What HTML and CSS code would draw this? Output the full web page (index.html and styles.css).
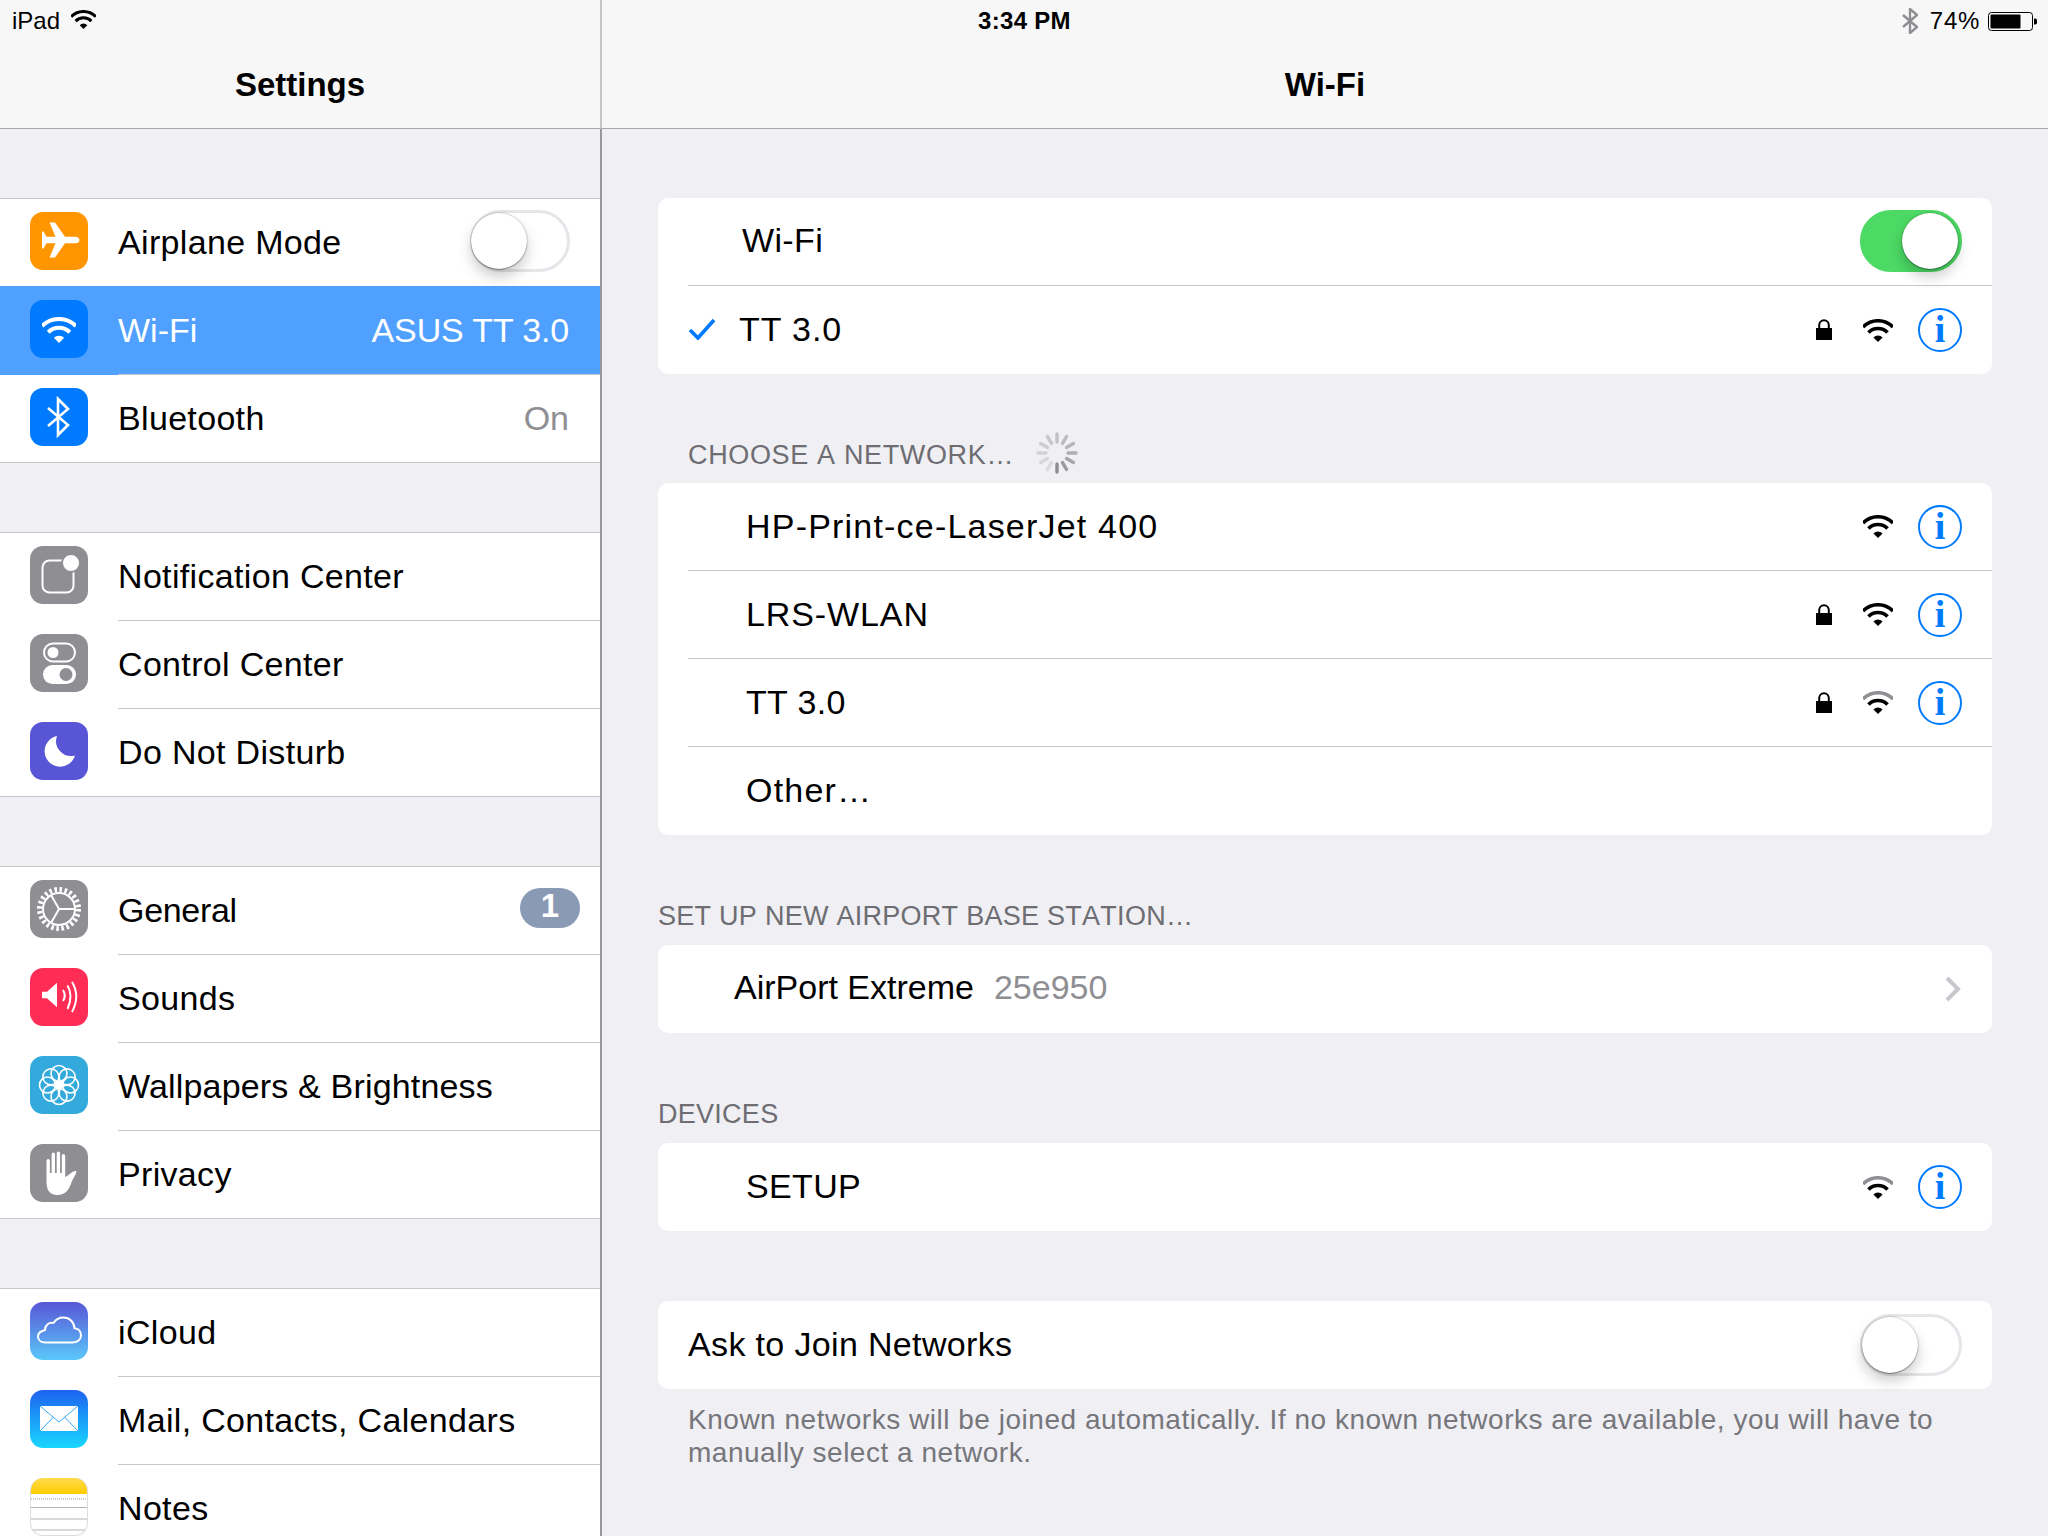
FILE: index.html
```html
<!DOCTYPE html>
<html lang="en">
<head>
<meta charset="utf-8">
<title>Settings – Wi-Fi</title>
<link rel="stylesheet" href="styles.css">
</head>
<body>
<svg class="sprites" aria-hidden="true">
  <symbol id="wifi" viewBox="0 0 30 23">
    <path class="wifi-outer" d="M0 8A21.2 21.2 0 0 1 30 8"/>
    <path class="wifi-mid" d="M5.45 13.45A13.5 13.5 0 0 1 24.55 13.45"/>
    <path class="wifi-dot" d="M15 23L10.4 18.4A6.5 6.5 0 0 1 19.6 18.4Z"/>
  </symbol>
  <symbol id="lock" viewBox="0 0 16 22">
    <path class="lock-shape" d="M0 10H2.2V7A5.8 5.8 0 0 1 13.8 7V10H16V22H0ZM4.2 10H11.8V7A3.8 3.8 0 0 0 4.2 7Z"/>
  </symbol>
</svg>

<div class="ipad">
  <div class="status">
    <div class="status-left">
      <span>iPad</span>
      <svg class="status-wifi"><use href="#wifi"/></svg>
    </div>
    <div class="status-time">3:34 PM</div>
    <div class="status-right">
      <svg class="status-bt" viewBox="0 0 16 26"><path d="M1 7L15 19L8 25V1L15 7L1 19"/></svg>
      <span class="status-pct">74%</span>
      <svg class="status-batt" viewBox="0 0 49 19">
        <rect class="batt-case" x=".5" y=".5" width="44" height="18" rx="3"/>
        <rect class="batt-fill" x="2.5" y="2.5" width="30" height="14" rx="1"/>
        <path class="batt-fill" d="M46 6.5h1.2a1.8 1.8 0 0 1 1.8 1.8v2.4a1.8 1.8 0 0 1-1.8 1.8H46Z"/>
      </svg>
    </div>
  </div>

  <aside class="side">
    <header class="nav nav-side"><h1 class="nav-title">Settings</h1></header>
    <div class="side-scroll">
      <section class="group">
        <div class="row">
          <div class="icon bg-orange">
            <svg viewBox="0 0 58 58"><path class="fill" d="M49.5 28c0-2-2-3.3-4-3.3H35L25 10.5h-5.5l6 14.2h-9l-3-5.2H12v17h1.5l3-5.2h9l-6 14.2H25l10-14.2h10.5c2 0 4-1.300 4-3.300Z"/></svg>
          </div>
          <div class="row-body"><span class="row-label">Airplane Mode</span><span class="toggle"><span class="knob"></span></span></div>
        </div>
        <div class="row row-selected">
          <div class="icon bg-blue">
            <svg viewBox="0 0 58 58"><use class="icon-wifi" href="#wifi" x="12" y="17" width="34" height="26"/></svg>
          </div>
          <div class="row-body"><span class="row-label">Wi-Fi</span><span class="row-value">ASUS TT 3.0</span></div>
        </div>
        <div class="row">
          <div class="icon bg-blue">
            <svg viewBox="0 0 58 58"><path class="line line-bt" d="M18 20L38 37L28 47V11L38 21L18 38"/></svg>
          </div>
          <div class="row-body"><span class="row-label">Bluetooth</span><span class="row-value">On</span></div>
        </div>
      </section>

      <section class="group">
        <div class="row">
          <div class="icon bg-gray">
            <svg viewBox="0 0 58 58">
              <rect class="line" x="12.500" y="14.500" width="31" height="32" rx="7"/>
              <circle class="fill ring" cx="41" cy="17" r="9"/>
            </svg>
          </div>
          <div class="row-body"><span class="row-label">Notification Center</span></div>
        </div>
        <div class="row">
          <div class="icon bg-gray">
            <svg viewBox="0 0 58 58">
              <rect class="line" x="14" y="9.500" width="31" height="18" rx="9"/>
              <circle class="fill" cx="23" cy="18.500" r="5.500"/>
              <rect class="fill" x="13" y="31" width="33" height="19" rx="9.500"/>
              <circle class="cut" cx="36" cy="40.500" r="6.500"/>
            </svg>
          </div>
          <div class="row-body"><span class="row-label">Control Center</span></div>
        </div>
        <div class="row">
          <div class="icon bg-indigo">
            <svg viewBox="0 0 58 58"><path class="fill" d="M27 14A15.500 15.500 0 1 0 45 33.500A15 15 0 0 1 27 14Z"/></svg>
          </div>
          <div class="row-body"><span class="row-label">Do Not Disturb</span></div>
        </div>
      </section>

      <section class="group">
        <div class="row">
          <div class="icon bg-gray">
            <svg viewBox="0 0 58 58">
              <circle class="gear-teeth" cx="29" cy="29" r="19.500"/>
              <circle class="line" cx="29" cy="29" r="16"/>
              <path class="line" d="M29 29H45M29 29L21 15M29 29L21 43"/>
            </svg>
          </div>
          <div class="row-body"><span class="row-label label-tight">General</span><span class="badge">1</span></div>
        </div>
        <div class="row">
          <div class="icon bg-pink">
            <svg viewBox="0 0 58 58">
              <path class="fill" d="M12 23.700H17L27 14.700V39.300L17 30.300H12Z"/>
              <path class="line" d="M33 22Q36.500 27.500 33 33M37.500 17.500Q43.500 27.500 37.500 41M42 14Q50.500 28 42 44"/>
            </svg>
          </div>
          <div class="row-body"><span class="row-label">Sounds</span></div>
        </div>
        <div class="row">
          <div class="icon bg-cyan">
            <svg viewBox="0 0 58 58">
              <g class="petals">
                <circle cx="29" cy="17.500" r="8"/><circle cx="37.100" cy="20.900" r="8"/>
                <circle cx="40.500" cy="29" r="8"/><circle cx="37.100" cy="37.100" r="8"/>
                <circle cx="29" cy="40.500" r="8"/><circle cx="20.900" cy="37.100" r="8"/>
                <circle cx="17.500" cy="29" r="8"/><circle cx="20.900" cy="20.900" r="8"/>
              </g>
              <circle class="fill" cx="29" cy="29" r="3.200"/>
            </svg>
          </div>
          <div class="row-body"><span class="row-label label-snug">Wallpapers &amp; Brightness</span></div>
        </div>
        <div class="row">
          <div class="icon bg-gray">
            <svg viewBox="0 0 58 58"><path class="fill" d="M16.500 17q0-2 1.700-2t1.700 2V29h1.700V10.500q0-2 1.700-2t1.700 2V29h1.700V9.500q0-2 1.700-2t1.700 2V29h1.700V12q0-2 1.700-2t1.700 2V33C38 32 43 26 46 27C47.500 28 44 33 42 37C39.500 44 37 51 27 51C20 51 16.500 46 16.500 38Z"/></svg>
          </div>
          <div class="row-body"><span class="row-label">Privacy</span></div>
        </div>
      </section>

      <section class="group">
        <div class="row">
          <div class="icon bg-icloud">
            <svg viewBox="0 0 58 58"><path class="line" d="M15 40.500H43C48 40.500 51 37 51 33.500C51 29 48 26.500 44.500 26.200C44 20 39.500 15.500 33.500 15.500C28.500 15.500 25.500 18 23.500 21C18.500 20 15 23.500 15 28C11 29 8 31 8 34.500C8 38 11 40.500 15 40.500Z"/></svg>
          </div>
          <div class="row-body"><span class="row-label">iCloud</span></div>
        </div>
        <div class="row">
          <div class="icon bg-mail">
            <svg viewBox="0 0 58 58">
              <rect class="fill" x="10" y="16" width="38" height="25"/>
              <path class="mail-lines" d="M10 16L29 32L48 16M10 41L23.500 27M48 41L34.500 27"/>
            </svg>
          </div>
          <div class="row-body"><span class="row-label">Mail, Contacts, Calendars</span></div>
        </div>
        <div class="row">
          <div class="icon bg-notes">
            <svg viewBox="0 0 58 58">
              <path class="notes-dots" d="M0 21H58"/>
              <path class="notes-lines" d="M0 29.500H58M0 41H58M0 52H58"/>
            </svg>
          </div>
          <div class="row-body"><span class="row-label">Notes</span></div>
        </div>
      </section>
    </div>
  </aside>

  <main class="detail">
    <header class="nav"><h1 class="nav-title">Wi-Fi</h1></header>
    <div class="detail-body">
      <section class="card">
        <div class="crow"><span class="clabel pad-54">Wi-Fi</span><span class="toggle toggle-on"><span class="knob"></span></span></div>
        <div class="crow">
          <svg class="check" viewBox="0 0 28 22"><path d="M2 12L10 20L26 2"/></svg>
          <span class="clabel pad-23 label-roomy">TT 3.0</span>
          <span class="meta">
            <svg class="lock"><use href="#lock"/></svg>
            <svg class="wifi"><use href="#wifi"/></svg>
            <span class="info">i</span>
          </span>
        </div>
      </section>

      <div class="section-head inset">
        <span>CHOOSE A NETWORK…</span>
        <svg class="spinner" viewBox="-21 -21 42 42">
          <g class="spokes">
            <path class="s0" d="M0 11V19"/>
            <path class="s1" transform="rotate(-30)" d="M0 11V19"/>
            <path class="s2" transform="rotate(-60)" d="M0 11V19"/>
            <path class="s3" transform="rotate(-90)" d="M0 11V19"/>
            <path class="s4" transform="rotate(-120)" d="M0 11V19"/>
            <path class="s5" transform="rotate(-150)" d="M0 11V19"/>
            <path class="s6" transform="rotate(180)" d="M0 11V19"/>
            <path class="s7" transform="rotate(150)" d="M0 11V19"/>
            <path class="s8" transform="rotate(120)" d="M0 11V19"/>
            <path class="s9" transform="rotate(90)" d="M0 11V19"/>
            <path class="s10" transform="rotate(60)" d="M0 11V19"/>
            <path class="s11" transform="rotate(30)" d="M0 11V19"/>
          </g>
        </svg>
      </div>
      <section class="card">
        <div class="crow"><span class="clabel pad-58 label-wide label-level">HP-Print-ce-LaserJet 400</span>
          <span class="meta"><svg class="wifi"><use href="#wifi"/></svg><span class="info">i</span></span></div>
        <div class="crow"><span class="clabel pad-58 label-roomy label-level">LRS-WLAN</span>
          <span class="meta"><svg class="lock"><use href="#lock"/></svg><svg class="wifi"><use href="#wifi"/></svg><span class="info">i</span></span></div>
        <div class="crow"><span class="clabel pad-58 label-level">TT 3.0</span>
          <span class="meta"><svg class="lock"><use href="#lock"/></svg><svg class="wifi wifi-weak"><use href="#wifi"/></svg><span class="info">i</span></span></div>
        <div class="crow"><span class="clabel pad-58 label-wide">Other…</span></div>
      </section>

      <div class="section-head">SET UP NEW AIRPORT BASE STATION…</div>
      <section class="card">
        <div class="crow crow-flush">
          <span class="clabel pad-58 label-plain">AirPort Extreme</span>
          <span class="csub">25e950</span>
          <svg class="chevron" viewBox="0 0 16 26"><path d="M2 2L13 13L2 24"/></svg>
        </div>
      </section>

      <div class="section-head">DEVICES</div>
      <section class="card">
        <div class="crow"><span class="clabel pad-58">SETUP</span>
          <span class="meta"><svg class="wifi wifi-weak"><use href="#wifi"/></svg><span class="info">i</span></span></div>
      </section>

      <section class="card card-ask">
        <div class="crow"><span class="clabel">Ask to Join Networks</span><span class="toggle"><span class="knob"></span></span></div>
      </section>
      <p class="foot">Known networks will be joined automatically. If no known networks are available, you will have to manually select a network.</p>
    </div>
  </main>
</div>
</body>
</html>
```

FILE: styles.css
```css
* { box-sizing: border-box; }
html, body { margin: 0; height: 1536px; overflow: hidden; }
body { font-family: "Liberation Sans", Arial, sans-serif; color: #000; background: #efeff4; }
h1 { margin: 0; }
p { margin: 0; }
.sprites { position: absolute; width: 0; height: 0; }

.wifi-outer, .wifi-mid { fill: none; stroke-width: 3.6; }
.wifi-outer { stroke: var(--wifi-outer, currentColor); }
.wifi-mid { stroke: currentColor; }
.wifi-dot { fill: currentColor; }
.lock-shape { fill: #000; fill-rule: evenodd; }

.ipad { position: relative; display: flex; width: 2048px; height: 1536px; overflow: hidden; }

/* status bar lies over both navigation bars */
.status {
  position: absolute; top: 0; left: 0; right: 0; height: 42px; z-index: 2;
  display: grid; grid-template-columns: 1fr auto 1fr; align-items: center;
  padding: 0 11px 0 12px; font-size: 24px; color: #000;
}
.status-left { display: flex; align-items: center; gap: 11px; }
.status-wifi { width: 25px; height: 19px; margin-top: -4px; }
.status-time { font-weight: 700; letter-spacing: .3px; }
.status-right { display: flex; align-items: center; justify-content: flex-end; }
.status-bt { width: 16px; height: 26px; fill: none; stroke: #8e8e93; stroke-width: 2.4; margin-right: 12px; }
.status-pct { letter-spacing: .7px; margin-right: 8px; }
.status-batt { width: 49px; height: 19px; }
.batt-case { fill: none; stroke: #000; }
.batt-fill { fill: #000; }

/* navigation bars */
.nav {
  height: 129px; padding-top: 42px; display: flex; align-items: center; justify-content: center;
  background: #f7f7f7; border-bottom: 1px solid #a7a7aa;
}
.nav-side { border-right: 2px solid #c6c6c8; }
.nav-title { font-size: 33px; font-weight: 700; line-height: 86px; }

/* master column */
.side { width: 602px; flex: none; display: flex; flex-direction: column; }
.side-scroll { flex: 1; padding-top: 69px; border-right: 2px solid #98989d; background: #efeff4; }
.group { background: #fff; border-top: 1px solid #c8c7cc; margin-bottom: 69px; }
.row { display: flex; height: 88px; padding-left: 30px; }
.row:last-child { border-bottom: 1px solid #c8c7cc; }
.icon { flex: none; width: 58px; height: 58px; margin-top: 13px; border-radius: 13px; overflow: hidden; }
.icon svg { display: block; width: 58px; height: 58px; }
.row-body {
  flex: 1; display: flex; align-items: center; justify-content: space-between;
  margin-left: 30px; padding-right: 31px; border-bottom: 1px solid #c8c7cc; font-size: 34px;
}
.row:last-child .row-body { border-bottom: 0; }
.row-label { color: #000; letter-spacing: .33px; }
.label-tight { letter-spacing: -.3px; }
.label-snug { letter-spacing: .17px; }
.row-value { color: #8e8e93; }
.row-body .toggle { width: 100px; margin: 0 -1px 3px 0; }
.row-selected { height: 89px; margin-top: -1px; position: relative; background: #4fa0ff; }
.row-selected .icon { margin-top: 14px; }
.row-selected .row-label, .row-selected .row-value { color: #fff; letter-spacing: 0; }
.row-selected .row-value { letter-spacing: -.15px; }
.row-selected .row-body { border-bottom-color: #c8c7cc; }

.bg-orange { background: #ff9500; }
.bg-blue { background: #007aff; }
.bg-gray { background: #8e8e93; }
.bg-indigo { background: #5856d6; }
.bg-pink { background: #ff2d55; }
.bg-cyan { background: #34aadc; }
.bg-icloud { background: linear-gradient(#5856d6, #5ac8fa); }
.bg-mail { background: linear-gradient(#1d62f0, #19d7ff); }
.bg-notes { background: linear-gradient(#ffdb4c, #ffcc02 28%, #fff 28%); border: 1px solid #dcdcdc; border-top: 0; }

.fill { fill: #fff; }
.line { fill: none; stroke: #fff; stroke-width: 2; }
.line-bt { stroke-width: 2.6; }
.cut { fill: #8e8e93; }
.ring { stroke: #8e8e93; stroke-width: 2; }
.icon-wifi { color: #fff; }
.gear-teeth { fill: none; stroke: #fff; stroke-width: 5; stroke-dasharray: 2.55 2.55; }
.petals circle { fill: none; stroke: #fff; stroke-width: 1.6; }
.mail-lines { fill: none; stroke: #35a6f5; stroke-width: 1; }
.notes-dots { stroke: #9a9a9a; stroke-width: 1; stroke-dasharray: 1 1; }
.notes-lines { stroke: #b4b4b4; stroke-width: 1; }

.badge {
  width: 60px; height: 40px; margin: -5px -11px 0 0; border-radius: 20px; background: #8a9ab5;
  color: #fff; font-size: 33px; font-weight: 700; line-height: 36px; text-align: center;
}

/* toggles */
.toggle {
  position: relative; flex: none; display: block; width: 102px; height: 62px; border-radius: 31px;
  background: #fff; border: 3px solid #e5e5ea;
}
.toggle-on { background: #4cd964; border-color: #4cd964; margin-bottom: 1px; }
.knob {
  position: absolute; left: -1px; top: 0; width: 56px; height: 56px; border-radius: 50%; background: #fff;
  box-shadow: 0 1px 1px rgba(0,0,0,.3), 0 0 2px rgba(0,0,0,.35), 0 8px 14px rgba(0,0,0,.2);
}
.toggle-on .knob { left: 39px; }
.row-body .knob { left: -2px; }

/* detail column */
.detail { flex: 1; min-width: 0; display: flex; flex-direction: column; }
.detail-body { flex: 1; padding: 69px 56px 0 56px; }
.card { background: #fff; border-radius: 10px; }
.card-ask { margin-top: 70px; }
.crow {
  display: flex; align-items: center; height: 88px; margin-left: 30px; padding-right: 30px;
  border-bottom: 1px solid #c8c7cc; font-size: 34px;
}
.crow:last-child { border-bottom: 0; }
.crow-flush { margin-left: 18px; padding-right: 31px; }
.clabel { color: #000; letter-spacing: .35px; padding-bottom: 2px; }
.label-wide { letter-spacing: 1.2px; }
.label-roomy { letter-spacing: .9px; }
.label-plain { letter-spacing: 0; padding-bottom: 4px; }
.label-level { padding-bottom: 0; }
.pad-54 { margin-left: 54px; }
.pad-23 { margin-left: 23px; }
.pad-58 { margin-left: 58px; }
.csub { margin-left: 20px; color: #8e8e93; padding-bottom: 4px; }
.check { width: 28px; height: 22px; fill: none; stroke: #007aff; stroke-width: 3.6; margin-bottom: 2px; }
.meta { margin-left: auto; display: flex; align-items: center; }
.crow > .toggle, .crow > .chevron { margin-left: auto; }
.lock { width: 16px; height: 22px; margin: 0 31px 2px 0; }
.wifi { width: 30px; height: 23px; margin-right: 25px; color: #000; }
.wifi-weak { --wifi-outer: #8e8e93; }
.info {
  width: 44px; height: 44px; border: 2px solid #007aff; border-radius: 50%; color: #007aff;
  display: block; text-align: center; font-family: "Liberation Serif", serif; font-size: 38px; font-weight: 700; line-height: 38px;
}
.chevron { width: 16px; height: 26px; fill: none; stroke: #c7c7cc; stroke-width: 4; margin-bottom: 1px; }

.section-head {
  display: flex; align-items: flex-end; height: 110px; padding-bottom: 13px;
  font-size: 27px; line-height: 32px; color: #6d6d72; font-kerning: none; letter-spacing: .27px;
}
.section-head.inset { padding-left: 30px; padding-bottom: 12px; height: 109px; letter-spacing: .65px; }
.spinner { width: 42px; height: 42px; margin: 0 0 -3px 22px; }
.spokes path { fill: none; stroke-width: 3.4; stroke-linecap: round; }
.s0 { stroke: #8e8e8e; } .s1 { stroke: #9b9b9b; } .s2 { stroke: #a6a6a6; } .s3 { stroke: #afafaf; }
.s4 { stroke: #b6b6b6; } .s5 { stroke: #bcbcbc; } .s6 { stroke: #c2c2c2; } .s7 { stroke: #c8c8c8; }
.s8 { stroke: #cdcdcd; } .s9 { stroke: #d2d2d2; } .s10 { stroke: #d6d6d6; } .s11 { stroke: #dadada; }

.foot { padding: 14px 30px 0; font-size: 28px; letter-spacing: .52px; line-height: 33px; color: #76767b; }
```
